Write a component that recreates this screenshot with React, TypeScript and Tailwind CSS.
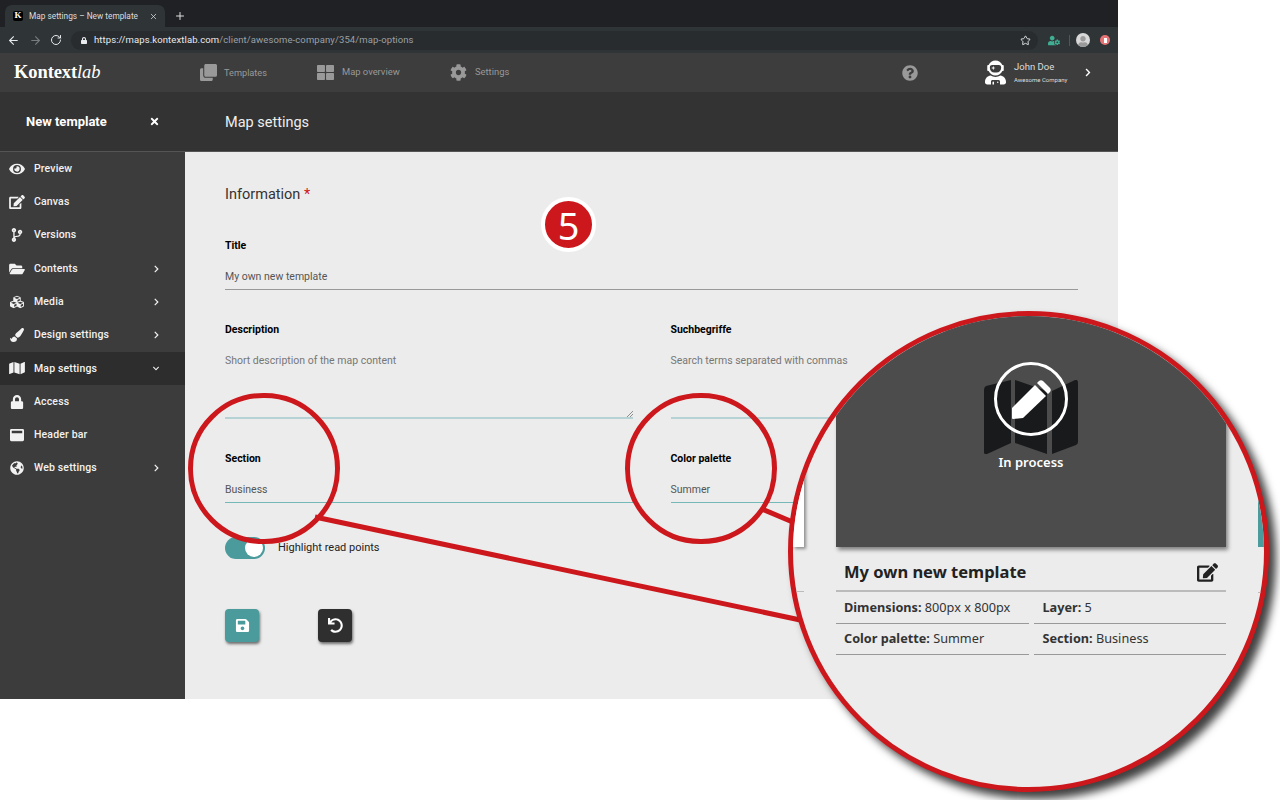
import React from "react";
import {
  FaEye, FaEdit, FaCodeBranch, FaFolderOpen, FaCubes, FaPaintBrush, FaMap, FaLock, FaWindowMaximize,
  FaGlobeAmericas, FaChevronRight, FaChevronDown, FaTimes, FaClone, FaThLarge, FaCog, FaQuestionCircle,
  FaSave, FaUndo, FaUserAstronaut, FaUser, FaUserCog,
} from "react-icons/fa";
import { ArrowLeft, ArrowRight, RotateCw, Star, Plus, X } from "lucide-react";

const items: [string, React.ComponentType<{ className?: string }>, string?, boolean?][] = [
  ["Preview", FaEye],
  ["Canvas", FaEdit],
  ["Versions", FaCodeBranch],
  ["Contents", FaFolderOpen, "r"],
  ["Media", FaCubes, "r"],
  ["Design settings", FaPaintBrush, "r"],
  ["Map settings", FaMap, "d", true],
  ["Access", FaLock],
  ["Header bar", FaWindowMaximize],
  ["Web settings", FaGlobeAmericas, "r"],
];

function Field({ label, value, dim, line, h, grip }: { label: string; value: string; dim?: boolean; line: string; h: string; grip?: boolean }) {
  return (
    <div>
      <div className="text-[10.5px] leading-[14px] font-bold text-black">{label}</div>
      <div className={`relative mt-[17px] ${h} ${line} text-[10.5px] leading-[14px] ${dim ? "text-[#777]" : "text-[#555]"}`}>
        {value}
        {grip && (
          <svg className="absolute right-0 bottom-0 w-[6px] h-[6px]" viewBox="0 0 6 6" fill="none" stroke="#666" strokeWidth="0.7">
            <path d="M0 6 L6 0 M3 6 L6 3" />
          </svg>
        )}
      </div>
    </div>
  );
}

export default function App() {
  return (
    <div className="relative w-[1280px] h-[800px] overflow-hidden bg-white font-['Roboto',sans-serif]">
      <div className="w-[1118px] h-[699px] flex flex-col">
        {/* browser tabs */}
        <div className="h-[27px] bg-[#202124] flex items-end pl-[5px]">
          <div className="w-[160px] h-[22px] bg-[#2f3437] rounded-t-[7px] flex items-center pl-[8px] pr-[7px] text-[#dcdcdc]">
            <div className="w-[10px] h-[10px] bg-black rounded-[2px] flex items-center justify-center text-white text-[9px] font-bold font-['Liberation_Serif',serif]">K</div>
            <span className="ml-[6px] text-[8.3px] whitespace-nowrap">Map settings – New template</span>
            <X className="ml-auto w-[9px] h-[9px]" />
          </div>
          <Plus className="ml-[9px] mb-[5px] w-[12px] h-[12px] text-[#e0e0e0]" />
        </div>
        {/* browser toolbar */}
        <div className="h-[26px] bg-[#2f3437] flex items-center pl-[7px]">
          <ArrowLeft className="w-[13px] h-[13px] text-[#e8eaed]" />
          <ArrowRight className="ml-[9px] w-[13px] h-[13px] text-[#777c80]" />
          <RotateCw className="ml-[8px] w-[12px] h-[12px] text-[#e8eaed]" />
          <div className="ml-[9px] w-[967px] h-[19px] rounded-full bg-[#282c2f] flex items-center pl-[10px] pr-[7px]">
            <FaLock className="w-[6px] h-[7px] text-[#e8eaed]" />
            <span className="ml-[7px] text-[9.5px] tracking-[0.1px] text-[#e8eaed] whitespace-nowrap">https://maps.kontextlab.com<span className="text-[#9aa0a6]">/client/awesome-company/354/map-options</span></span>
            <Star className="ml-auto w-[11px] h-[11px] text-[#e8eaed]" />
          </div>
          <FaUserCog className="ml-[10px] w-[12px] h-[11px] text-[#3fae93]" />
          <div className="ml-[9px] w-px h-[11px] bg-[#50565a]" />
          <div className="ml-[6px] w-[14px] h-[14px] rounded-full bg-[#d8d8d8] overflow-hidden flex items-end justify-center">
            <FaUser className="w-[10px] h-[11px] text-[#9a9a9a]" />
          </div>
          <div className="ml-[10px] w-[10px] h-[10px] rounded-full bg-[#e57373] flex items-center justify-center"><div className="w-[3px] h-[5px] bg-white" /></div>
        </div>
        {/* app header */}
        <div className="h-[39px] bg-[#3d3d3d] flex items-center text-[#999]">
          <div className="ml-[14px] w-[186px] text-white text-[18.5px] font-bold font-['Liberation_Serif',serif] tracking-[-0.1px]">Kontext<span className="font-normal italic">lab</span></div>
          <FaClone className="w-[17px] h-[17px]" />
          <span className="ml-[7px] w-[93px] text-[9.2px]">Templates</span>
          <FaThLarge className="w-[17px] h-[17px]" />
          <span className="ml-[8px] w-[108px] text-[9.4px]">Map overview</span>
          <FaCog className="w-[17px] h-[17px]" />
          <span className="ml-[8px] w-[427px] text-[9.4px]">Settings</span>
          <FaQuestionCircle className="w-[16px] h-[16px]" />
          <FaUserAstronaut className="ml-[67px] w-[21px] h-[25px] text-white" />
          <div className="ml-[8px] w-[66px] text-[#ddd]">
            <div className="text-[9.5px] leading-[12px]">John Doe</div>
            <div className="mt-[2px] text-[6px] leading-[9px] whitespace-nowrap">Awesome Company</div>
          </div>
          <FaChevronRight className="ml-[4px] w-[8px] h-[9px] text-white" />
        </div>
        {/* sub header */}
        <div className="h-[60px] bg-[#333] border-b border-[#555] flex items-center text-white">
          <div className="w-[225px] flex items-center">
            <span className="ml-[26px] w-[123px] text-[13px] font-bold">New template</span>
            <FaTimes className="w-[11px] h-[11px]" />
          </div>
          <span className="pt-[2px] text-[14.5px] text-[#eee]">Map settings</span>
        </div>
        <div className="flex-1 flex min-h-0">
          {/* sidebar */}
          <div className="w-[185px] bg-[#3c3c3c] text-[#f2f2f2]">
            {items.map(([label, Icon, arrow, active]) => (
              <div key={label} className={`h-[33.3px] flex items-center pl-[9px] ${active ? "bg-[#2d2d2d]" : ""}`}>
                <div className="w-[16px] flex justify-center"><Icon className="w-[16px] h-[14px]" /></div>
                <span className="ml-[9px] text-[10.5px] font-medium tracking-[0.15px]">{label}</span>
                {arrow === "r" && <FaChevronRight className="ml-auto mr-[25px] w-[7px] h-[8px]" />}
                {arrow === "d" && <FaChevronDown className="ml-auto mr-[25px] w-[8px] h-[7px]" />}
              </div>
            ))}
          </div>
          {/* main */}
          <div className="flex-1 bg-[#ececec] px-[40px] pt-[34px]">
            <div className="text-[14.5px] leading-[18px] text-[#333]">Information <span className="text-[#cc181c]">*</span></div>
            <div className="mt-[35px]">
              <Field label="Title" value="My own new template" line="border-b border-[#999]" h="h-[20px]" />
            </div>
            <div className="mt-[33px] grid grid-cols-2 gap-x-[38px]">
              <Field label="Description" value="Short description of the map content" dim line="border-b-2 border-[#b5d3d5]" h="h-[65px]" grip />
              <Field label="Suchbegriffe" value="Search terms separated with commas" dim line="border-b-2 border-[#b5d3d5]" h="h-[65px]" />
            </div>
            <div className="mt-[33px] grid grid-cols-2 gap-x-[38px]">
              <Field label="Section" value="Business" line="border-b border-[#74b8b8]" h="h-[20px]" />
              <Field label="Color palette" value="Summer" line="border-b border-[#74b8b8]" h="h-[20px]" />
            </div>
            <div className="mt-[34px] flex items-center">
              <div className="w-[40px] h-[22px] rounded-full bg-[#4b9a9c] flex items-center justify-end pr-[2px]">
                <div className="w-[18px] h-[18px] rounded-full bg-white" />
              </div>
              <span className="ml-[13px] text-[11px] text-[#222]">Highlight read points</span>
            </div>
            <div className="mt-[50px] flex gap-[59px]">
              <div className="w-[34px] h-[33px] rounded-[4px] bg-[#4b9a9c] shadow-[1px_2px_3px_rgba(0,0,0,0.55)] flex items-center justify-center"><FaSave className="w-[15px] h-[15px] text-white" /></div>
              <div className="w-[34px] h-[33px] rounded-[4px] bg-[#2f2f2f] shadow-[1px_2px_3px_rgba(0,0,0,0.55)] flex items-center justify-center"><FaUndo className="w-[15px] h-[15px] text-white" /></div>
            </div>
          </div>
        </div>
      </div>

      {/* callout overlay */}
      <svg className="absolute left-0 top-0 w-[1280px] h-[800px] pointer-events-none" viewBox="0 0 1280 800" fill="none">
        <path d="M315 517 L805 621" stroke="#cc181c" strokeWidth="5" />
        <path d="M762 509 L795 523" stroke="#cc181c" strokeWidth="5" />
      </svg>
      <div className="absolute left-[188px] top-[393px] w-[152px] h-[151px] rounded-full border-[5px] border-[#cc181c]" />
      <div className="absolute left-[625px] top-[393px] w-[152px] h-[151px] rounded-full border-[5px] border-[#cc181c]" />
      <div className="absolute left-[541px] top-[197px] w-[55px] h-[55px] rounded-full bg-[#cc181c] border-[4px] border-white flex items-center justify-center text-white text-[38px] leading-none font-['Noto_Sans',sans-serif]">5</div>

      {/* magnifier */}
      <div className="absolute left-[788px] top-[311px] w-[481px] h-[481px] rounded-full border-[5px] border-[#cc181c] shadow-[7px_7px_9px_rgba(0,0,0,0.75)] overflow-hidden bg-[#ececec] flex font-['Noto_Sans',sans-serif]">
        <div className="w-[11px] shrink-0">
          <div className="h-[231px] bg-white shadow-[2px_2px_3px_rgba(0,0,0,0.4)]" />
          <div className="mt-[44px] h-px bg-[#bbb]" />
        </div>
        <div className="ml-[32px] w-[390px] shrink-0">
          <div className="h-[231px] bg-[#4c4c4c] shadow-[2px_3px_4px_rgba(0,0,0,0.45)] flex flex-col items-center pt-[64px]">
            <div className="relative w-[94px] h-[74px]">
              <svg className="w-[94px] h-[74px]" viewBox="0 0 94 74" fill="#191a1c">
                <path d="M0 10 Q0 7 2 6 L27 0 V63 L3 74 Q0 75 0 72 Z" />
                <path d="M31 0 L63 11 V74 L31 63 Z" />
                <path d="M68 11 L91 0 Q94 -1 94 3 V62 Q94 64 92 65 L68 74 Z" />
              </svg>
              <div className="absolute left-[10px] top-[-18px] w-[74px] h-[74px] rounded-full border-[3px] border-white flex items-center justify-center">
                <svg className="w-[39px] h-[39px]" viewBox="0 0 39 39" fill="#fff">
                  <path d="M0 28 L23 5 L34 16 L11 38 L1 39 Q0 39 0 38 Z" />
                  <path d="M25 3 L27 1 Q29 -0.5 31 1 L38 8 Q39.5 10 38 12 L36 14 Z" />
                </svg>
              </div>
            </div>
            <div className="mt-[-1px] text-[13px] leading-[18px] font-semibold text-white">In process</div>
          </div>
          <div className="h-[45px] pt-[7px] border-b-2 border-[#bbb] flex items-center justify-between pl-[8px] pr-[8px]">
            <span className="text-[16.5px] font-bold text-[#222]">My own new template</span>
            <FaEdit className="w-[21px] h-[19px] text-[#222]" />
          </div>
          <div className="grid grid-cols-2 gap-x-[5px] text-[12.7px] text-[#333]">
            <div className="h-[31.5px] pl-[8px] border-b border-[#999] flex items-center"><span><b>Dimensions:</b> 800px x 800px</span></div>
            <div className="h-[31.5px] pl-[9px] border-b border-[#999] flex items-center"><span><b>Layer:</b> 5</span></div>
            <div className="h-[31.5px] pl-[8px] border-b border-[#999] flex items-center"><span><b>Color palette:</b> Summer</span></div>
            <div className="h-[31.5px] pl-[9px] border-b border-[#999] flex items-center"><span><b>Section:</b> Business</span></div>
          </div>
        </div>
        <div className="ml-[32px] w-[40px] shrink-0">
          <div className="h-[231px] bg-[#4b9a9c]" />
          <div className="mt-[45px] h-px bg-[#bbb]" />
        </div>
      </div>
    </div>
  );
}
